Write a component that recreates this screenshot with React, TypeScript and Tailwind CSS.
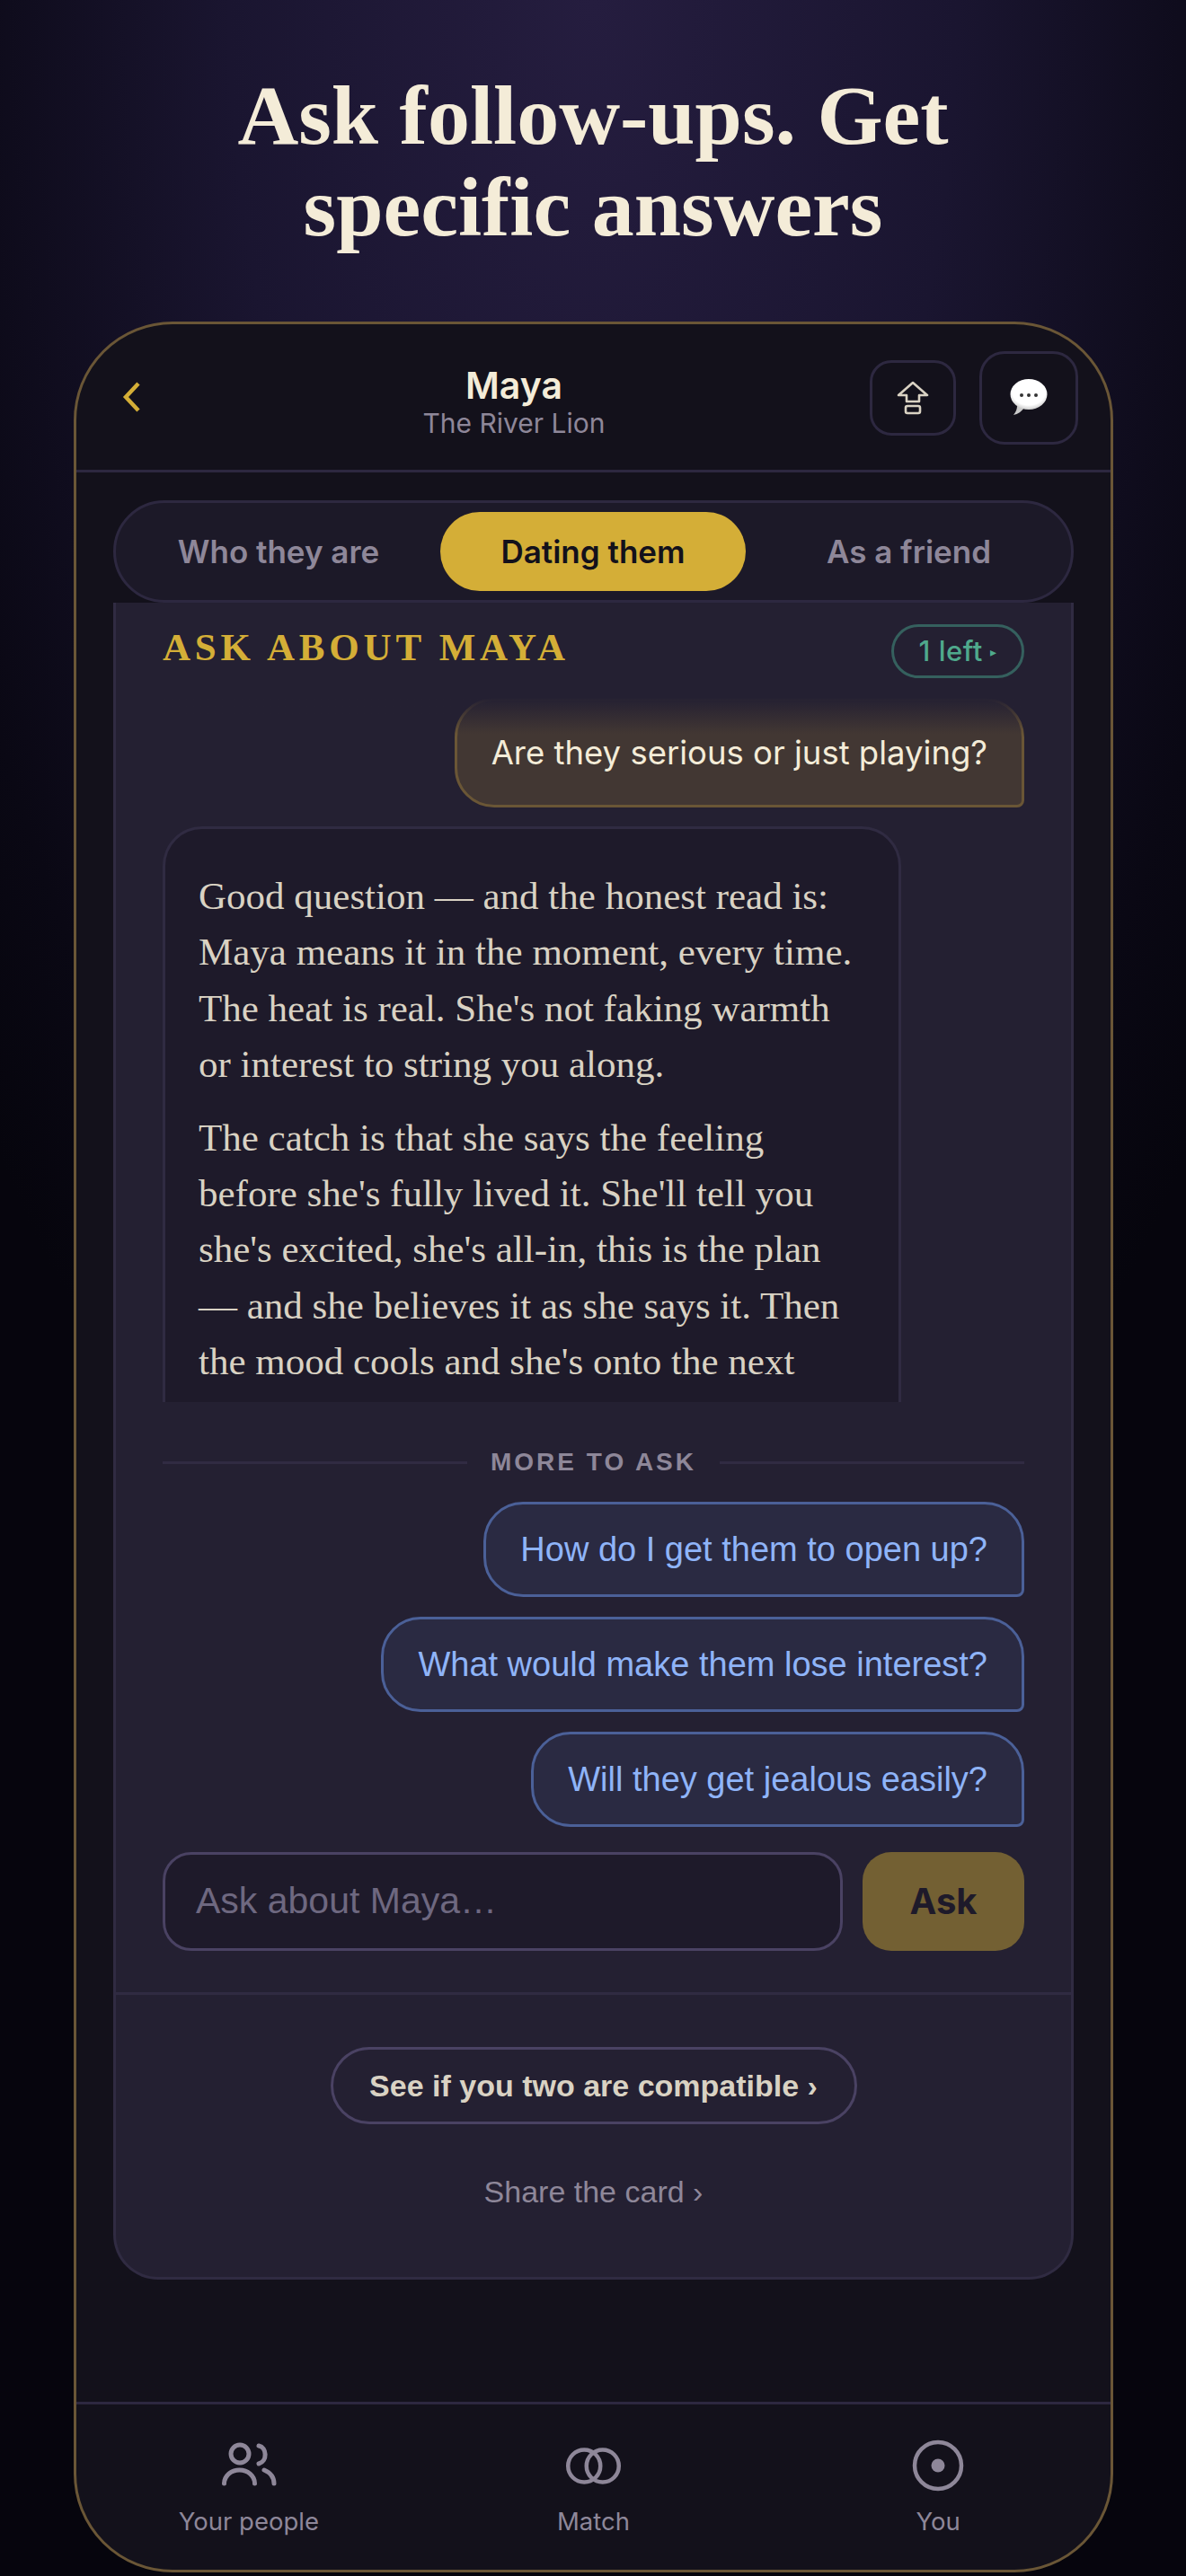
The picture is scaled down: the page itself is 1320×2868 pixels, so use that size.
function PeopleIcon() {
    return (
        <svg width="64" height="56" viewBox="0 0 64 56" fill="none" stroke="#8e8799" strokeWidth="5" strokeLinecap="round">
            <circle cx="22" cy="15" r="10" />
            <path d="M4.5 48 A17 15 0 0 1 38.5 48" />
            <path d="M43 6 C52 8 53 23 43 26" />
            <path d="M49 33 C56 36 60 41 60 48" />
        </svg>
    );
}

function MatchIcon() {
    return (
        <svg width="61" height="41" viewBox="0 0 61 41" fill="none" stroke="#8e8799" strokeWidth="4.5">
            <circle cx="20.25" cy="20.5" r="18" />
            <circle cx="40.75" cy="20.5" r="18" />
        </svg>
    );
}

function YouIcon() {
    return (
        <svg width="58" height="58" viewBox="0 0 58 58" fill="none">
            <circle cx="29" cy="29" r="26" stroke="#8e8799" strokeWidth="4.5" />
            <circle cx="29" cy="29" r="7.5" fill="#8e8799" />
        </svg>
    );
}

function ShareIcon() {
    return (
        <svg width="36" height="38" viewBox="0 0 36 38" fill="none" stroke="#d9d2c3" strokeWidth="2.6" strokeLinejoin="round">
            <path d="M18 2 L34 16 H25 V23 H11 V16 H2 Z" />
            <rect x="10" y="28" width="16" height="8" rx="2" />
        </svg>
    );
}

function ChatBubble() {
    return (
        <svg width="42" height="42" viewBox="0 0 42 42">
            <defs>
                <radialGradient id="bubbleShade" cx="50%" cy="40%" r="65%">
                    <stop offset="70%" stopColor="#ffffff" />
                    <stop offset="100%" stopColor="#bdbdbd" />
                </radialGradient>
            </defs>
            <path d="M4 40 C7 36 8 33 8 30 L16 32 C13 36 9 39 4 40 Z" fill="#c9c9c9" />
            <ellipse cx="21" cy="17" rx="20.5" ry="17" fill="url(#bubbleShade)" />
            <circle cx="13" cy="18" r="2" fill="#333" />
            <circle cx="21" cy="18" r="2" fill="#333" />
            <circle cx="29" cy="18" r="2" fill="#333" />
        </svg>
    );
}

const suggestions = [
    'How do I get them to open up?',
    'What would make them lose interest?',
    'Will they get jealous easily?',
];

const navItems = [
    { label: 'Your people', icon: <PeopleIcon /> },
    { label: 'Match', icon: <MatchIcon /> },
    { label: 'You', icon: <YouIcon /> },
];

export default function App() {
    return (
        <div className="w-[1320px] h-[2868px] overflow-hidden flex flex-col items-center font-['Inter',sans-serif] bg-[radial-gradient(ellipse_900px_1900px_at_50%_0%,#251d3f_0%,#1a1530_45%,#0a0814_85%,#06050d_100%)]">
            <h1 className="mt-[77px] w-[1000px] text-center font-['Liberation_Serif',serif] font-bold text-[94px] leading-[102px] text-[#f4ecd8]">
                Ask follow-ups. Get<br />specific answers
            </h1>

            <div className="mt-[77px] ml-[1px] w-[1157px] h-[2506px] flex flex-col rounded-[110px] border-[3px] border-[#6a5636] bg-[#13111b] overflow-hidden">
                {/* header */}
                <div className="h-[165px] shrink-0 relative flex items-center justify-between border-b-[3px] border-[#2d2840] pl-[50px] pr-[36px]">
                    <span className="text-[#d4ae37]">
                        <svg width="22" height="34" viewBox="0 0 22 34" fill="none" stroke="currentColor" strokeWidth="4.5"><path d="M19 2 L5 17 L19 32" /></svg>
                    </span>
                    <div className="absolute left-[300px] w-[374px] top-[44px] flex flex-col items-center">
                        <span className="text-[41px] leading-[48px] font-semibold text-[#f4ecd8]">Maya</span>
                        <span className="text-[30px] leading-[36px] text-[#8e8799]">The River Lion</span>
                    </div>
                    <div className="flex items-center gap-[26px] mt-[2px]">
                        <button className="w-[96px] h-[84px] rounded-[24px] border-[3px] border-[#2d2840] flex items-center justify-center"><ShareIcon /></button>
                        <button className="w-[110px] h-[104px] rounded-[28px] border-[3px] border-[#2d2840] flex items-center justify-center"><ChatBubble /></button>
                    </div>
                </div>

                <div className="flex-1 px-[41px] pt-[31px]">
                    {/* tabs */}
                    <div className="h-[114px] flex items-center p-[11px] rounded-[57px] border-[3px] border-[#2d2840] bg-[#1c1928] text-[35px] font-semibold">
                        <span className="w-[340px] text-center text-[#8e8799]">Who they are</span>
                        <span className="ml-[10px] w-[340px] h-[88px] rounded-[44px] bg-[#d4ae37] text-[#13111b] flex items-center justify-center">Dating them</span>
                        <span className="flex-1 pl-[12px] text-center text-[#8e8799]">As a friend</span>
                    </div>

                    {/* card */}
                    <div className="h-[1867px] flex flex-col bg-[#242032] border-x-[3px] border-b-[3px] border-[#302b42] rounded-b-[50px]">
                        <div className="px-[52px] pt-[22px]">
                            <div className="flex items-start justify-between">
                                <span className="mt-[4px] font-['Liberation_Serif',serif] font-bold text-[43px] leading-[48px] tracking-[4.8px] text-[#d4ae37]">ASK ABOUT MAYA</span>
                                <span className="w-[148px] h-[60px] mt-[2px] flex items-center justify-center rounded-[30px] border-[3px] border-[#35605e] text-[31px] font-medium tracking-[0.5px] text-[#4fa98c]">1 left <span className="ml-[8px] text-[14px]">▸</span></span>
                            </div>

                            <div className="relative mt-[22px] flex justify-end">
                                <div className="h-[122px] flex items-center px-[38px] rounded-t-[44px] rounded-bl-[44px] rounded-br-[8px] border-[3px] border-[#6a5636] bg-[#423733] text-[36.5px] text-[#f4ecd8]">
                                    Are they serious or just playing?
                                </div>
                                {/* scroll fade over the top of the thread */}
                                <div className="absolute inset-x-0 top-0 h-[40px] bg-gradient-to-b from-[#242032] to-transparent" />
                            </div>

                            <div className="mt-[21px] w-[822px] h-[641px] overflow-hidden rounded-t-[44px] border-x-[3px] border-t-[3px] border-[#302b42] bg-[#1e1a2a] px-[37px] pt-[44px] font-['Liberation_Serif',serif] text-[43px] leading-[62.4px] text-[#d9d2c3]">
                                <p>Good question — and the honest read is: Maya means it in the moment, every time. The heat is real. She's not faking warmth or interest to string you along.</p>
                                <p className="mt-[19px]">The catch is that she says the feeling before she's fully lived it. She'll tell you she's excited, she's all-in, this is the plan — and she believes it as she says it. Then the mood cools and she's onto the next thing.</p>
                            </div>

                            <div className="mt-[50px] flex items-center gap-[26px]">
                                <div className="flex-1 h-[3px] bg-[#302b42]" />
                                <span className="font-['Liberation_Sans',sans-serif] text-[28px] leading-[34px] font-bold tracking-[3px] text-[#8e8799]">MORE TO ASK</span>
                                <div className="flex-1 h-[3px] bg-[#302b42]" />
                            </div>

                            <div className="mt-[27px] flex flex-col items-end gap-[22px]">
                                {suggestions.map((s) => (
                                    <button key={s} className="h-[106px] px-[38px] rounded-t-[44px] rounded-bl-[44px] rounded-br-[8px] border-[3px] border-[#4b6098] bg-[#2a2a42] font-['Liberation_Sans',sans-serif] text-[38px] text-[#8fb4f8]">{s}</button>
                                ))}
                            </div>

                            <div className="mt-[28px] flex gap-[22px]">
                                <div className="flex-1 h-[110px] flex items-center px-[34px] rounded-[32px] border-[3px] border-[#4a4263] bg-[#1e1a2a] font-['Liberation_Sans',sans-serif] text-[41px] text-[#6e6880]">Ask about Maya…</div>
                                <button className="w-[180px] h-[110px] rounded-[32px] bg-[#736033] text-[40px] font-bold text-[#1e1a2a]">Ask</button>
                            </div>
                        </div>

                        <div className="mt-[46px] border-t-[3px] border-[#302b42] flex flex-col items-center pt-[58px]">
                            <button className="w-[586px] h-[86px] rounded-[43px] border-[3px] border-[#4a4263] font-['Liberation_Sans',sans-serif] text-[34px] font-bold text-[#d9d2c3]">See if you two are compatible ›</button>
                            <span className="mt-[55px] font-['Liberation_Sans',sans-serif] text-[34px] leading-[40px] text-[#8e8799]">Share the card ›</span>
                        </div>
                    </div>
                </div>

                {/* bottom nav */}
                <div className="h-[187px] shrink-0 border-t-[3px] border-[#2d2840] flex">
                    {navItems.map((item) => (
                        <div key={item.label} className="flex-1 flex flex-col items-center pt-[38px]">
                            <div className="h-[60px] flex items-center justify-center">{item.icon}</div>
                            <span className="mt-[14px] text-[27.5px] leading-[36px] text-[#8e8799]">{item.label}</span>
                        </div>
                    ))}
                </div>
            </div>
        </div>
    );
}
